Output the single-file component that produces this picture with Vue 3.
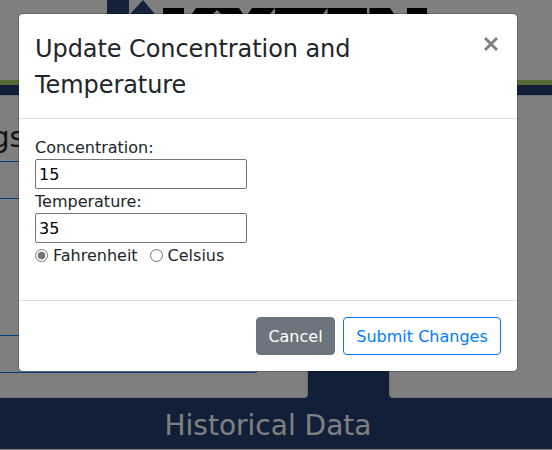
<script setup>
import { ref } from 'vue'

const concentration = ref('15')
const temperature = ref('35')
const unit = ref('F')
</script>

<template>
  <div class="page">
    <header class="banner">
      <svg class="logo" width="330" height="24" viewBox="0 0 330 24" aria-hidden="true">
        <path fill="#2a4478" d="M7 0h22v24H7zM31 13L43 0l11 13v11H31z" />
        <path d="M63 8h21v6H63zM96 8h43l4 6H92zM152 8h115v6H148zM269.500 8H290l4 6h-24.500zM307 8h20v6h-20z" />
        <path fill="#fff" d="M113 14l4-4 4 4zM170 14l5-6v6zM223 14l4.500-6v6z" />
      </svg>
    </header>
    <div class="panels">
      <section class="card card-left">
        <h3 class="card-title">Readings</h3>
        <div class="field"></div>
        <div class="field lower"></div>
      </section>
      <section class="card card-right"></section>
    </div>
    <h2 class="history">Historical Data</h2>
    <div class="below"></div>
  </div>

  <div class="backdrop">
    <div class="dialog" role="dialog">
      <div class="dialog-header">
        <h4 class="title">Update Concentration and Temperature</h4>
        <button class="close" aria-label="Close">
          <svg width="14" height="14" viewBox="0 0 14 14">
            <path d="M1 1l12 12M13 1L1 13" stroke="#808080" stroke-width="3" />
          </svg>
        </button>
      </div>
      <div class="dialog-body">
        <label class="caption" for="conc">Concentration:</label>
        <input id="conc" v-model="concentration" class="text" type="text" />
        <label class="caption" for="temp">Temperature:</label>
        <input id="temp" v-model="temperature" class="text" type="text" />
        <div class="units">
          <label><input v-model="unit" type="radio" value="F" /><span>Fahrenheit</span></label>
          <label><input v-model="unit" type="radio" value="C" /><span>Celsius</span></label>
        </div>
      </div>
      <div class="dialog-footer">
        <button class="btn cancel">Cancel</button>
        <button class="btn submit">Submit Changes</button>
      </div>
    </div>
  </div>
</template>

<style>
body {
  margin: 0;
  overflow: hidden;
  background: #fff;
}
</style>

<style scoped>
* {
  box-sizing: border-box;
}
.page,
.backdrop {
  width: 552px;
  height: 450px;
  font-family: Verdana, "DejaVu Sans", sans-serif;
  font-size: 16px;
  line-height: 24px;
  color: #212529;
}
.page {
  display: flex;
  flex-direction: column;
  overflow: hidden;
}
.banner {
  height: 85px;
  padding-left: 100px;
  border-bottom: 5px solid #acd66c;
  flex: none;
}
.logo {
  display: block;
}
.panels {
  height: 313px;
  flex: none;
  display: flex;
  justify-content: space-between;
  padding-top: 10px;
  background: #243e70;
}
.card {
  background: #fff;
  border: 1px solid #dfdfdf;
}
.card-left {
  width: 308px;
  border-left: 0;
  border-radius: 0 0 4px 0;
}
.card-right {
  width: 163px;
  border-right: 0;
  border-radius: 0 0 0 4px;
}
.card-title {
  width: 24px;
  margin: 24px 0 5px;
  display: flex;
  justify-content: flex-end;
  font-size: 28px;
  font-weight: 400;
  line-height: 36px;
}
.field {
  width: 258px;
  height: 38px;
  border: 1px solid #007bff;
  border-left: 0;
  border-radius: 0 4px 4px 0;
}
.lower {
  margin-top: 136px;
}
.history {
  margin: 0;
  height: 51px;
  flex: none;
  padding-right: 16px;
  background: #243e70;
  color: #fff;
  font-size: 28px;
  font-weight: 400;
  line-height: 55px;
  text-align: center;
}
.below {
  height: 1px;
  background: #fff;
}
.backdrop {
  position: absolute;
  top: 0;
  left: 0;
  padding: 13px 0 0 18px;
  background: rgba(0, 0, 0, 0.5);
}
.dialog {
  width: 500px;
  height: 359px;
  display: flex;
  flex-direction: column;
  background: #fff;
  background-clip: padding-box;
  border: 1px solid rgba(0, 0, 0, 0.2);
  border-radius: 5px;
}
.dialog-header {
  height: 105px;
  padding: 16px;
  display: flex;
  justify-content: space-between;
  align-items: flex-start;
  border-bottom: 1px solid #dee2e6;
}
.title {
  width: 400px;
  margin: 1px 0 0;
  font-size: 24px;
  font-weight: 400;
  line-height: 36px;
  letter-spacing: -0.07px;
}
.close {
  display: flex;
  margin: 7px 3px 0 0;
  padding: 0;
  border: 0;
  background: none;
}
.dialog-body {
  flex: 1;
  padding: 16px;
  display: flex;
  flex-direction: column;
  align-items: flex-start;
}
.caption {
  height: 24px;
  padding-top: 1px;
}
.text {
  width: 212px;
  height: 30px;
  margin: 0;
  padding: 1px 3px;
  border: 1px solid #767676;
  border-radius: 2px;
  outline: 0;
  background: #fff;
  color: #000;
  font: inherit;
}
.units {
  display: flex;
  gap: 12px;
}
.units label {
  display: flex;
  align-items: center;
  gap: 5px;
}
.units span {
  height: 24px;
  padding-top: 1px;
}
.units input {
  appearance: none;
  width: 13px;
  height: 13px;
  margin: 1px 0 0;
  border: 1px solid #767676;
  border-radius: 50%;
  background: #fff;
}
.units input:checked {
  background: radial-gradient(circle, #767676 3.5px, #fff 4.2px);
}
.dialog-footer {
  height: 71px;
  padding: 16px;
  display: flex;
  justify-content: flex-end;
  gap: 8px;
  border-top: 1px solid #dee2e6;
}
.btn {
  height: 38px;
  padding: 2px 0 0;
  border: 1px solid #6c757d;
  border-radius: 4px;
  font: inherit;
  white-space: nowrap;
}
.cancel {
  width: 79px;
  background: #6c757d;
  color: #fff;
}
.submit {
  width: 158px;
  border-color: #007bff;
  background: #fff;
  color: #007bff;
}
</style>
